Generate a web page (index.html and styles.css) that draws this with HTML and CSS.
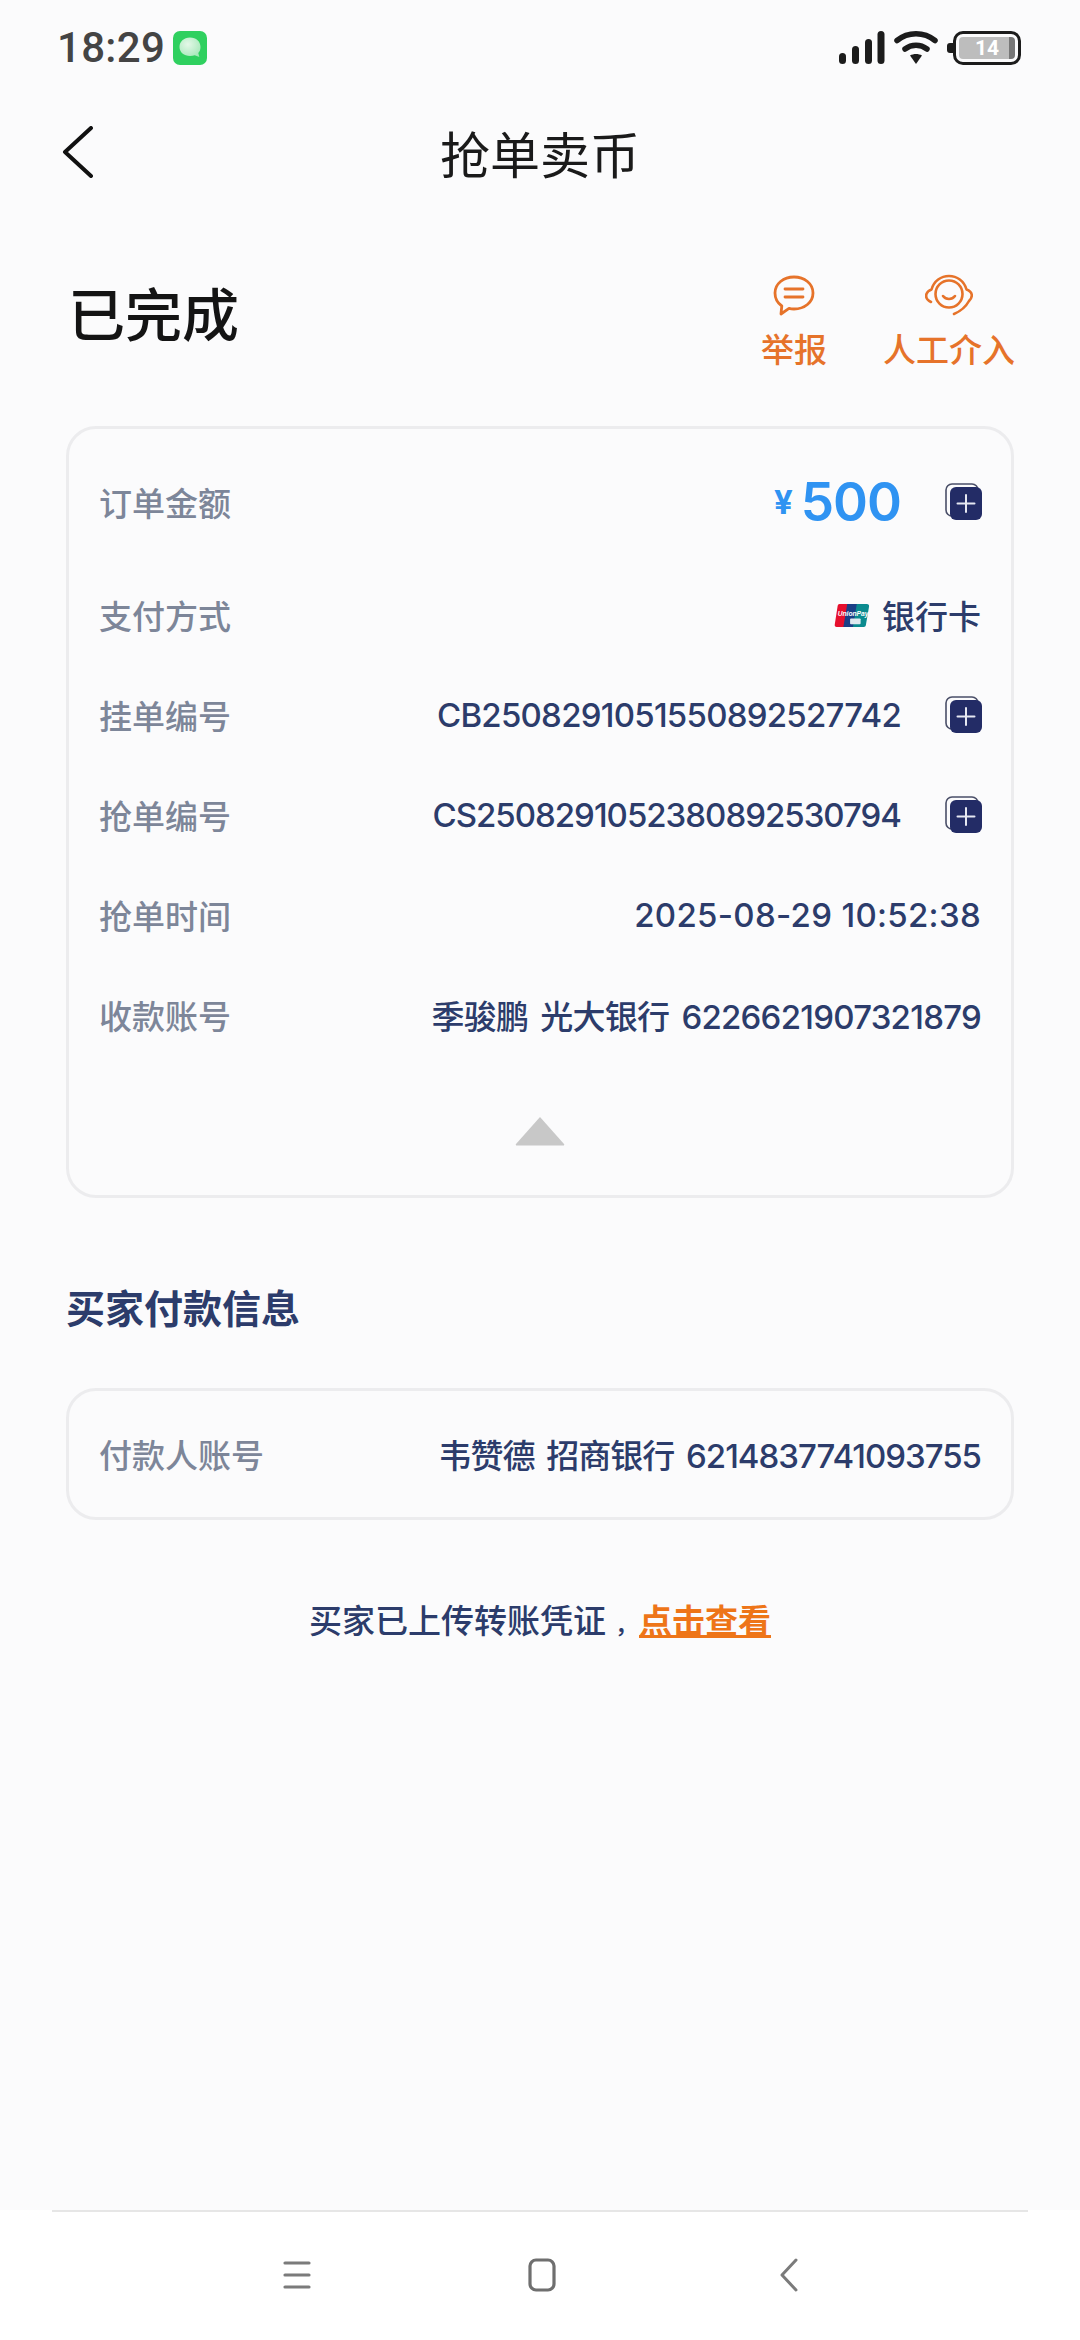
FILE: index.html
```html
<!DOCTYPE html>
<html lang="zh-CN">
<head>
  <meta charset="UTF-8" />
  <title>抢单卖币</title>
  <meta name="viewport" content="width=device-width, initial-scale=1.0"/>
  <link rel="stylesheet" href="styles.css">
</head>
<body>
  <div class="status-bar">
    <div class="status-left">
      <span class="clock">18:29</span>
      <svg class="msg-icon" width="34" height="34" viewBox="0 0 34 34">
        <defs>
          <radialGradient id="bubble" cx="0.4" cy="0.35" r="0.8">
            <stop offset="0" stop-color="#e4f8e8"/>
            <stop offset="1" stop-color="#9fe6b4"/>
          </radialGradient>
        </defs>
        <rect width="34" height="34" rx="7" fill="#2fd05f"/>
        <path d="M17 6.500c6.300 0 10.500 4 10.500 9.500 0 2.500-.8 4.500-2.200 6l1 4-4.500-1.800c-1.400.6-3 .8-4.800.8-6 0-10.500-3.800-10.500-9S10.700 6.500 17 6.500z" fill="url(#bubble)"/>
      </svg>
    </div>
    <div class="status-right">
      <svg width="46" height="34" viewBox="0 0 46 34">
        <g fill="#1c1c1c">
          <rect x="0" y="22" width="7" height="11" rx="3.500"/>
          <rect x="13" y="15" width="7" height="18" rx="3.500"/>
          <rect x="26" y="8" width="7" height="25" rx="3.500"/>
          <rect x="38.500" y="0" width="7" height="33" rx="3.500"/>
        </g>
      </svg>
      <svg class="wifi" width="44" height="34" viewBox="0 0 44 34">
        <path d="M3 9.500C14 .5 30 .5 41 9.500" fill="none" stroke="#1c1c1c" stroke-width="5.500" stroke-linecap="round"/>
        <path d="M11 18c6.500-5 15.500-5 22 0" fill="none" stroke="#1c1c1c" stroke-width="5.500" stroke-linecap="round"/>
        <path d="M16 24.500c3.500-2 8.500-2 12 0L22 33z" fill="#1c1c1c"/>
      </svg>
      <div class="battery">
        <span class="battery-tip"></span>
        <div class="battery-fill"><span>14</span></div>
      </div>
    </div>
  </div>

  <div class="nav">
    <svg class="back" width="34" height="52" viewBox="0 0 34 52">
      <path d="M30 2L4 26l26 24" fill="none" stroke="#111" stroke-width="4" stroke-linecap="round" stroke-linejoin="round"/>
    </svg>
    <h1>抢单卖币</h1>
  </div>

  <div class="head">
    <h2>已完成</h2>
    <div class="actions">
      <div class="action">
        <svg width="44" height="44" viewBox="0 0 44 44">
          <path d="M22 3c10.500 0 19 6.700 19 16s-8.500 16-19 16c-2 0-3.500-.2-5-.6L9 40l.8-8C5.500 29 3 24.500 3 19 3 9.700 11.500 3 22 3z" fill="none" stroke="#e6732a" stroke-width="2.800" stroke-linejoin="round"/>
          <path d="M13 15h18M13 23h18" stroke="#e6732a" stroke-width="2.800" stroke-linecap="round"/>
        </svg>
        <span>举报</span>
      </div>
      <div class="action">
        <svg width="48" height="44" viewBox="0 0 48 44">
          <circle cx="24" cy="20" r="13.500" fill="none" stroke="#e6732a" stroke-width="2.600"/>
          <path d="M6 28C2 26 .5 23 1.500 20c.6-2 2.200-3.500 5-4.500C9 7 16 2 24 2s15 5 17.500 13.500c3 1 4.800 2.800 5.200 5 .4 2.500-.6 4.500-2.700 6.500-3 5.500-8 10-15 13" fill="none" stroke="#e6732a" stroke-width="2.600" stroke-linecap="round" stroke-linejoin="round"/>
          <path d="M18 22c3 4 9 4 12 0" fill="none" stroke="#e6732a" stroke-width="2.600" stroke-linecap="round"/>
        </svg>
        <span>人工介入</span>
      </div>
    </div>
  </div>

  <div class="card order-card">
    <div class="row amount-row">
      <span class="label">订单金额</span>
      <div class="value">
        <span class="amount"><small>¥</small>500</span>
        <svg class="copy" width="38" height="38" viewBox="0 0 38 38"><use href="#copy-icon"/></svg>
      </div>
    </div>
    <div class="row pay-row">
      <span class="label">支付方式</span>
      <div class="value">
        <svg width="36" height="23" viewBox="0 0 36 24">
          <path d="M5 0h11L12 24H2C.500 24-.3 23 0 21.500L3 2C3.200.800 4 0 5 0z" fill="#e60f2d"/>
          <path d="M13 0h13l-4 24H9z" fill="#1a3f86"/>
          <path d="M23 0h10.500C35.300 0 36 1 35.800 2.500L32.500 22c-.2 1.300-1 2-2.200 2H19z" fill="#0b8b8f"/>
          <text x="3" y="12.500" class="up-text">UnionPay</text>
          <rect x="16" y="15" width="11" height="6" rx="1" fill="#dfe9ef"/>
        </svg>
        <span>银行卡</span>
      </div>
    </div>
    <div class="row">
      <span class="label">挂单编号</span>
      <div class="value">
        <span class="num">CB2508291051550892527742</span>
        <svg class="copy" width="38" height="38" viewBox="0 0 38 38"><use href="#copy-icon"/></svg>
      </div>
    </div>
    <div class="row">
      <span class="label">抢单编号</span>
      <div class="value">
        <span class="num tight">CS2508291052380892530794</span>
        <svg class="copy" width="38" height="38" viewBox="0 0 38 38"><use href="#copy-icon"/></svg>
      </div>
    </div>
    <div class="row">
      <span class="label">抢单时间</span>
      <div class="value"><span class="time">2025-08-29 10:52:38</span></div>
    </div>
    <div class="row">
      <span class="label">收款账号</span>
      <div class="value"><span class="num account">季骏鹏 光大银行 6226621907321879</span></div>
    </div>
    <div class="collapse">
      <svg width="50" height="30" viewBox="0 0 50 30">
        <path d="M25 1L49 28c.6.800.2 1.500-.8 1.500H1.800C.8 29.500.4 28.800 1 28z" fill="#c8c8c8"/>
      </svg>
    </div>
  </div>

  <h3>买家付款信息</h3>

  <div class="card payer-card">
    <div class="row">
      <span class="label">付款人账号</span>
      <div class="value"><span class="num tight account">韦赞德 招商银行 6214837741093755</span></div>
    </div>
  </div>

  <p class="note">买家已上传转账凭证<span class="comma">，</span><a href="#">点击查看</a></p>

  <div class="bottom-nav">
    <svg width="30" height="34" viewBox="0 0 30 34">
      <path d="M3 5h24M3 17h24M3 29h24" stroke="#7b7b7b" stroke-width="3.200" stroke-linecap="round"/>
    </svg>
    <svg width="30" height="34" viewBox="0 0 30 34">
      <rect x="3" y="2" width="24" height="30" rx="6" fill="none" stroke="#6f6f6f" stroke-width="3.200"/>
    </svg>
    <svg width="30" height="34" viewBox="0 0 30 34">
      <path d="M24 2L10 17l14 15" fill="none" stroke="#7b7b7b" stroke-width="3" stroke-linecap="round" stroke-linejoin="round"/>
    </svg>
  </div>

  <svg class="defs" width="0" height="0">
    <symbol id="copy-icon" viewBox="0 0 38 38">
      <rect x="1" y="1" width="32" height="32" rx="6" fill="none" stroke="#4a4f68" stroke-width="1.600"/>
      <rect x="5" y="4" width="32" height="33" rx="6" fill="#232c66"/>
      <path d="M21 12v17M12.500 20.500h17" stroke="#e6e8f2" stroke-width="2" stroke-linecap="round"/>
    </symbol>
  </svg>
</body>
</html>
```

FILE: styles.css
```css
* { box-sizing: border-box; }
html, body { margin: 0; padding: 0; }
body {
  width: 1080px; height: 2340px; display: flex; flex-direction: column;
  background: #fbfbfc; color: #2c3c6b; overflow: hidden;
  font-family: "Inter", "Noto Sans CJK SC", sans-serif;
}

.status-bar { height: 96px; padding: 31px 59px 0 57px; display: flex; justify-content: space-between; align-items: flex-start; }
.status-left { display: flex; align-items: center; gap: 8px; }
.clock { font-family: "Roboto", sans-serif; font-size: 42px; font-weight: 500; line-height: 34px; letter-spacing: .3px; color: #444; }
.status-right { display: flex; align-items: center; gap: 9px; }
.wifi { margin-right: 6px; }
.battery { position: relative; width: 68px; height: 34px; border: 3px solid #1c1c1c; border-radius: 10px; padding: 3px; }
.battery-tip { position: absolute; left: -9px; top: 9px; width: 6px; height: 10px; background: #1c1c1c; border-radius: 3px 0 0 3px; }
.battery-fill { height: 100%; background: linear-gradient(90deg, #bdbdbd 90%, #777 90%); border-radius: 4px; display: flex; align-items: center; justify-content: center; }
.battery-fill span { font-family: "Roboto", sans-serif; font-size: 21px; font-weight: 700; color: #fff; }

.nav { height: 112px; padding-left: 61px; position: relative; display: flex; align-items: center; }
.nav h1 { position: absolute; left: 0; right: 0; margin: 0; text-align: center; font-size: 50px; font-weight: 400; color: #1a1a1a; }

.head { margin-top: 55px; padding: 0 52px 0 68px; height: 120px; display: flex; justify-content: space-between; align-items: center; }
.head h2 { margin: -24px 0 0; font-size: 57px; font-weight: 500; color: #141414; }
.actions { display: flex; gap: 56px; padding-right: 13px; }
.action { display: flex; flex-direction: column; align-items: center; gap: 10px; color: #e6732a; font-size: 33px; line-height: 44px; font-weight: 500; }
.action svg { display: block; }

.card { margin: 0 66px; border: 3px solid #ececee; border-radius: 30px; padding: 0 30px; }
.order-card { margin-top: 43px; height: 772px; display: flex; flex-direction: column; }
.row { height: 100px; flex: none; display: flex; justify-content: space-between; align-items: center; font-size: 33px; font-weight: 500; }
.label { color: #7d8699; }
.value { display: flex; align-items: center; gap: 12px; color: #2c3c6b; }
.value .copy { margin-left: 32px; margin-right: -2px; }
.num { letter-spacing: -.75px; }
.tight { letter-spacing: -1px; }
.account { word-spacing: 4px; }
.time { letter-spacing: .3px; }
.amount-row { margin-top: 23px; }
.pay-row { margin-top: 13px; }
.amount { font-size: 53px; font-weight: 600; letter-spacing: -1px; color: #2f93f2; display: flex; align-items: center; }
.amount small { font-size: 33px; font-weight: 700; margin-right: 9px; }
.up-text { font-family: "Liberation Sans", sans-serif; font-size: 7px; font-weight: 700; font-style: italic; fill: #fff; }
.collapse { display: flex; justify-content: center; margin-top: 51px; }

h3 { margin: 83px 66px 0; font-size: 39px; line-height: 56px; font-weight: 700; color: #2c3c6b; }
.payer-card { margin-top: 51px; height: 132px; display: flex; flex-direction: column; justify-content: center; }

.note { margin: 71px 0 0; text-align: center; font-size: 33px; line-height: 60px; font-weight: 500; color: #2c3c6b; }
.comma { font-size: 24px; margin-left: 9px; }
.note a { color: #ee7518; font-weight: 700; }

.bottom-nav { margin-top: auto; height: 130px; background: #fff; position: relative; display: flex; justify-content: center; align-items: center; gap: 215px; padding-left: 4px; }
.bottom-nav::before { content: ""; position: absolute; left: 52px; right: 52px; top: 0; height: 2px; background: #e6e6e6; }
.defs { position: absolute; }
```
